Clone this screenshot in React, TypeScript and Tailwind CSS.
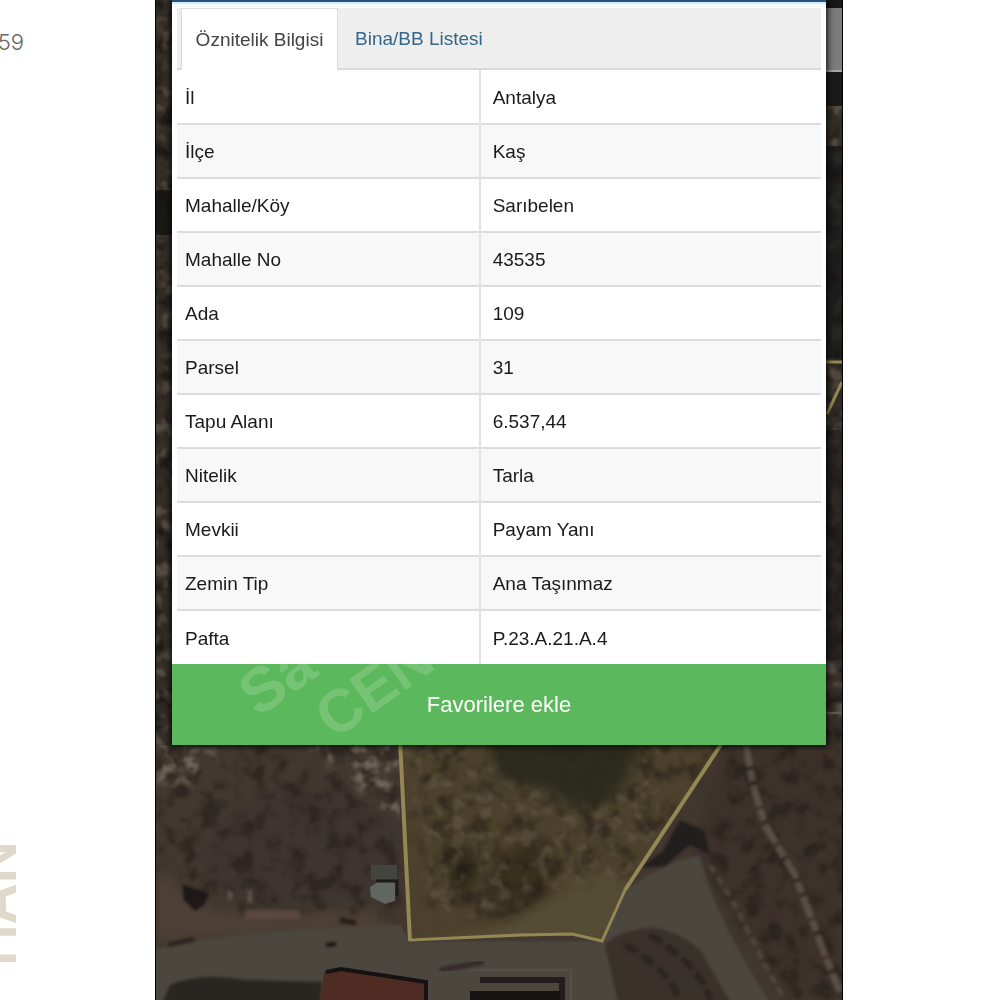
const rows = [
  ["İl", "Antalya"],
  ["İlçe", "Kaş"],
  ["Mahalle/Köy", "Sarıbelen"],
  ["Mahalle No", "43535"],
  ["Ada", "109"],
  ["Parsel", "31"],
  ["Tapu Alanı", "6.537,44"],
  ["Nitelik", "Tarla"],
  ["Mevkii", "Payam Yanı"],
  ["Zemin Tip", "Ana Taşınmaz"],
  ["Pafta", "P.23.A.21.A.4"],
];

const SatelliteMap = () => (
  <svg
    className="absolute inset-0 h-full w-full"
    viewBox="155 0 688 1000"
    preserveAspectRatio="xMidYMin slice"
    aria-hidden="true"
  >
    <defs>
      <filter id="scrub" x="0" y="0" width="1" height="1" colorInterpolationFilters="sRGB">
        <feTurbulence type="fractalNoise" baseFrequency="0.055" numOctaves="4" seed="8" />
        <feColorMatrix values="0 0 0 0 0.1  0 0 0 0 0.08  0 0 0 0 0.07  4 0 0 0 -1.9" />
        <feGaussianBlur stdDeviation="1" />
      </filter>
      <filter id="stones" x="0" y="0" width="1" height="1" colorInterpolationFilters="sRGB">
        <feTurbulence type="fractalNoise" baseFrequency="0.071" numOctaves="3" seed="21" />
        <feColorMatrix values="0 0 0 0 0.5  0 0 0 0 0.46  0 0 0 0 0.4  0 5 0 0 -2.5" />
        <feGaussianBlur stdDeviation="1" />
      </filter>
      <filter id="soft" x="-20%" y="-20%" width="140%" height="140%" colorInterpolationFilters="sRGB">
        <feGaussianBlur stdDeviation="6" />
      </filter>
      <filter id="edge" x="-10%" y="-10%" width="120%" height="120%" colorInterpolationFilters="sRGB">
        <feGaussianBlur stdDeviation="1.5" />
      </filter>
      <mask id="stonyCorners">
        <g filter="url(#soft)" fill="#fff">
          <path d="M290 728H405V825L365 795Z" />
          <path d="M145 728H215V765L190 785H145Z" />
        </g>
      </mask>
      <mask id="roughGround">
        <g filter="url(#soft)" fill="#fff">
          <path d="M145 728H400V915L250 915 190 895 145 860Z" />
          <path d="M400 728H740L625 880 570 885 500 920 430 910Z" />
          <path d="M730 728H860V1010H790L705 860Z" />
        </g>
      </mask>
      <clipPath id="parcel">
        <path d="M400 740 L410 941 L572 935 L602 941 L625 890 L724 740Z" />
      </clipPath>
    </defs>

    <rect x="155" width="688" height="1000" fill="#423830" />
    <rect x="155" width="688" height="745" fill="#352e28" />
    <rect x="155" width="688" height="745" filter="url(#scrub)" opacity="0.8" />
    <rect x="155" width="688" height="745" filter="url(#stones)" opacity="0.45" />
    <rect x="155" y="190" width="20" height="45" fill="#14130f" opacity="0.8" />

    {/* fields */}
    <g filter="url(#soft)">
      <path d="M155 745H400V800L370 780 320 745Z" fill="#453b33" />
      <path d="M230 810 Q330 760 395 820 L400 900 250 915 195 860Z" fill="#3e3530" />
      <path d="M155 865 L210 910 380 912 390 932 155 940Z" fill="#4d4036" />
      <path d="M724 745H843V1000H790L690 860Z" fill="#3d322b" />
    </g>

    {/* roads */}
    <g filter="url(#edge)">
      <path d="M150 950 Q240 928 400 925 L410 941 600 941 625 890 Q665 862 700 855 Q715 920 775 1010 H735 Q700 950 655 927 Q615 930 605 945 L635 1010 H150Z" fill="#4b463e" />
      <path d="M605 945 Q655 910 700 950 L735 1010 H620Z" fill="#39312a" />
      <path d="M170 985 Q200 972 245 980 L322 982 320 1010H160Z" fill="#292621" />
    </g>

    {/* selected parcel */}
    <g clipPath="url(#parcel)">
      <rect x="395" y="735" width="340" height="215" fill="#4b412c" />
      <g filter="url(#soft)">
        <path d="M530 835 Q555 860 550 900 L520 925 480 895 500 860Z" fill="#382f1d" />
        <path d="M445 845 Q470 835 480 870 Q470 900 450 892Z" fill="#302a1b" />
        <path d="M410 950 L500 925 570 885 610 870 635 890 602 950Z" fill="#554c35" />
      </g>
    </g>

    {/* rough ground */}
    <g mask="url(#roughGround)">
      <rect x="155" y="745" width="688" height="255" filter="url(#scrub)" opacity="0.45" />
      <rect x="400" y="745" width="260" height="175" filter="url(#stones)" opacity="0.28" />
    </g>
    <g mask="url(#stonyCorners)">
      <rect x="155" y="745" width="245" height="90" filter="url(#stones)" opacity="0.75" />
    </g>
    <path d="M485 735 H640 Q640 775 600 808 Q570 812 550 790 L500 780Z" fill="#2a291b" filter="url(#soft)" opacity="0.9" />
    <g filter="url(#edge)" fill="none">
      <path d="M746 745 L753 785 765 825 795 875 825 955 840 992" stroke="#665b51" strokeWidth="7" strokeDasharray="22 3 12 4" opacity="0.7" />
      <path d="M710 865 L735 905 765 965 785 1000" stroke="#574c41" strokeWidth="5" strokeDasharray="9 5" opacity="0.7" />
      <path d="M650 935 Q700 965 710 1000 M625 945 Q670 970 680 1000" stroke="#241f1a" strokeWidth="6" strokeDasharray="14 6" opacity="0.7" />
      <path d="M640 868 L662 852 680 820 704 830 710 855 690 845 665 866Z" fill="#231e1e" />
      <path d="M182 884 L209 893 205 904 195 911 184 900Z" fill="#1f1818" />
      <path d="M168 945 L194 939" stroke="#29221d" strokeWidth="4" />
      <path d="M326 945 L336 944" stroke="#171411" strokeWidth="4" />
      <path d="M340 920 L356 923" stroke="#261c18" strokeWidth="5" />
      <path d="M250 903 V890 M230 891 V900" stroke="#5b5048" strokeWidth="5" />
      <path d="M245 915 H300" stroke="#5a483e" strokeWidth="9" />
    </g>

    {/* buildings */}
    <path d="M371 865H397V880H371Z" fill="#434340" />
    <path d="M370 887 378 882H395V901L385 904 371 897Z" fill="#616663" />
    <path d="M376 881H397V896" fill="none" stroke="#1c1a1a" strokeWidth="3" />
    <path d="M324 972 Q336 966 350 970 L428 981 V1000H320Z" fill="#4e2c23" />
    <path d="M326 972 L341 969 426 982 V1000" fill="none" stroke="#161112" strokeWidth="4" />
    <path d="M480 970 H470 M480 970 H571V1000" fill="none" stroke="#574c47" strokeWidth="2" />
    <path d="M478 976H564V1000H395Z" fill="none" />
    <path d="M480 980H562V1000" fill="none" stroke="#231e1e" strokeWidth="6" />
    <path d="M470 991H560V1000H470Z" fill="#151212" />
    <path d="M440 970 L484 962" stroke="#332a27" strokeWidth="5" filter="url(#edge)" />

    {/* parcel borders */}
    <g fill="none" stroke="#948755">
      <path d="M400 740 L410 941" strokeWidth="4" />
      <path d="M410 940 L520 935 572 934 602 941 625 890" strokeWidth="3" />
      <path d="M625 890 L724 740" strokeWidth="4" />
      <path d="M826 362 H843 M842 382 L827 414" strokeWidth="3" />
    </g>

    {/* map control on the right edge */}
    <rect x="822" y="0" width="21" height="8" fill="#161819" />
    <rect x="822" y="8" width="21" height="63" fill="#7c7c7c" />
    <path d="M822 71H843" stroke="#a8a8a8" strokeWidth="2" />
    <rect x="822" y="72" width="21" height="34" fill="#1a1a19" />
    <rect x="822" y="146" width="21" height="212" fill="#161715" opacity="0.7" />
    <rect x="822" y="430" width="21" height="230" fill="#1c1b19" opacity="0.7" />
    <path d="M826 713H843" stroke="#5e5954" strokeWidth="2" />
  </svg>
);

const Watermark = () => (
  <svg
    className="pointer-events-none absolute inset-y-0 left-0 h-full w-[300px]"
    viewBox="0 0 300 81"
    aria-hidden="true"
  >
    <g
      fill="#fff"
      fillOpacity="0.16"
      fontFamily="'Liberation Sans', Arial, sans-serif"
      fontWeight="700"
    >
      <text fontSize="62" transform="translate(86 54) rotate(-35)">Sa</text>
      <text fontSize="60" transform="translate(162 76) rotate(-35)">CEN</text>
    </g>
  </svg>
);

const ParcelCard = () => (
  <section className="relative border-t-2 border-[#25537b] bg-white shadow-[0_0_6px_2px_rgba(0,0,0,0.8)]">
    <div className="h-[6px] border-t-2 border-[#d3ecfa] bg-[#f7fcff]" />
    <div className="px-[5px]">
      <nav className="flex h-[62px] items-stretch border-b-2 border-[#d9d9d9] bg-[#eeeeee] pl-1 text-[19px] leading-6">
        <button className="-mb-[2px] w-[157px] border-x border-t border-[#dcdcdc] bg-white text-[#444]">
          Öznitelik Bilgisi
        </button>
        <button className="px-[17px] pt-[2px] text-[#35678a]">Bina/BB Listesi</button>
      </nav>
      <table className="w-full table-fixed border-collapse text-left text-[19px] leading-6 text-[#1a1a1a]">
        <tbody>
          {rows.map(([label, value]) => (
            <tr
              key={label}
              className="h-[54px] border-b-2 border-[#dcdcdc] last:border-b-0 even:bg-[#f8f8f8]"
            >
              <th scope="row" className="w-[47%] border-r-2 border-[#e2e2e2] pt-[2px] pb-0 pl-2 font-normal">
                {label}
              </th>
              <td className="pt-[2px] pb-0 pl-3">{value}</td>
            </tr>
          ))}
        </tbody>
      </table>
    </div>
    <button className="relative block h-[81px] w-full overflow-hidden bg-[#5cb85c] text-[22px] leading-8 text-white">
      <Watermark />
      Favorilere ekle
    </button>
  </section>
);

const App = () => {
  return (
    <div className="flex min-h-screen overflow-hidden bg-white font-['Liberation_Sans',Arial,sans-serif]">
      <aside className="flex w-[155px] shrink-0 flex-col items-start justify-between pt-[26px] pb-[34px]">
        <div className="flex w-6 justify-end overflow-hidden font-['Inter',sans-serif] text-[22px] leading-8 font-light text-[#666]">
          59
        </div>
        <div className="flex w-6 justify-end overflow-hidden">
          <span className="rotate-180 font-['Inter',sans-serif] text-[56px] leading-[56px] font-semibold text-[#dfd9cb] [writing-mode:vertical-rl]">
            HAN
          </span>
        </div>
      </aside>
      <main className="relative flex-1 overflow-hidden border-x border-black bg-[#423830] px-4">
        <SatelliteMap />
        <ParcelCard />
      </main>
      <div className="w-[157px] shrink-0" />
    </div>
  );
};

export default App;
